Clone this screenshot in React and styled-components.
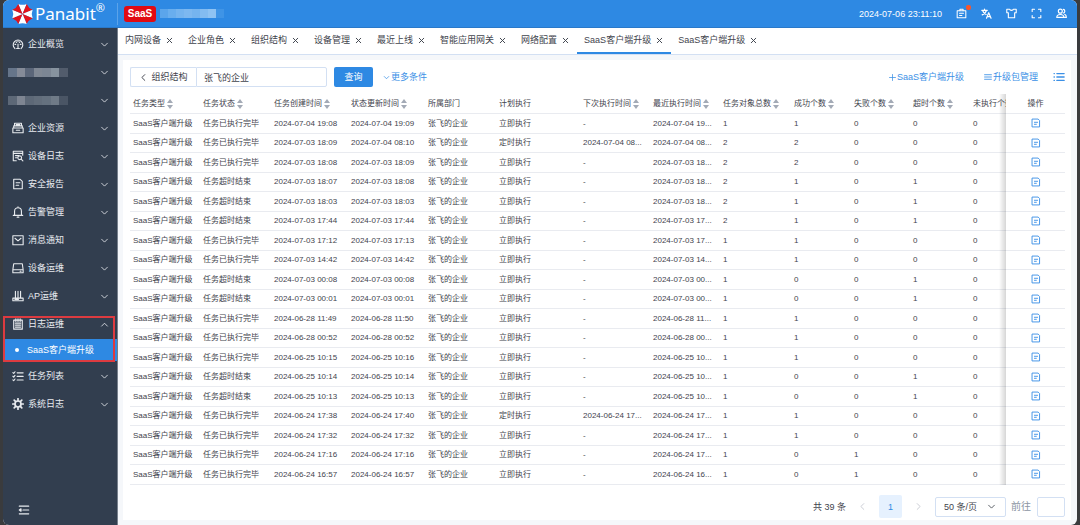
import React from 'react';
import styled, { createGlobalStyle, css } from 'styled-components';

const GlobalStyle = createGlobalStyle`
  * {
    box-sizing: border-box;
  }

  body {
    margin: 0;
    background: #3a3b3d;
    color: #3f444d;
    font: 9px/12px 'Liberation Sans', 'Noto Sans CJK SC', sans-serif;
  }

  button, input, select {
    font: inherit;
    color: inherit;
  }

  button {
    padding: 0;
    border: 0;
    background: none;
    cursor: pointer;
  }
`;

const Shell = styled.div`
  display: flex;
  flex-direction: column;
  min-height: 100vh;
  margin: 0 3px;
  border-radius: 6px;
  overflow: hidden;
  background: #f5f7fa;
`;

const Svg = styled.svg`
  flex: none;
  width: ${props => props.$size || 12}px;
  height: ${props => props.$size || 12}px;
  fill: none;
  stroke: currentColor;
  stroke-width: ${props => props.$weight || 1.3};
  stroke-linecap: round;
  stroke-linejoin: round;
`;

/* ---------- header ---------- */

const Header = styled.header`
  display: flex;
  align-items: center;
  height: 28px;
  padding-right: 10px;
  background: #2e89e3;
  border-bottom: 1px solid #2a79c9;
  color: #fff;
`;

const Brand = styled.a`
  display: flex;
  align-items: center;
  gap: 2px;
  width: 115px;
  height: 22px;
  padding-left: 9px;
  border-right: 1px solid #5ba3ea;
  color: #fff;
  font: 17px/22px 'Noto Sans', sans-serif;
  text-decoration: none;

  sup {
    align-self: flex-start;
    margin-left: -2px;
    font-size: 11px;
    line-height: 10px;
  }
`;

const SaasBadge = styled.span`
  width: 32px;
  margin-left: 6px;
  border-radius: 3px;
  background: #e10a12;
  font-weight: bold;
  font-size: 10px;
  line-height: 16px;
  text-align: center;
`;

const Mosaic = styled.span`
  display: flex;
  margin-left: ${props => props.$indent || 0}px;
`;

const Tile = styled.i`
  width: ${props => props.$w}px;
  height: ${props => props.$h}px;
  background: ${props => props.$color};
`;

const HeaderTools = styled.div`
  display: flex;
  align-items: center;
  gap: 14px;
  margin-left: auto;
`;

const ToolButton = styled.button`
  position: relative;
  display: flex;
  color: #fff;
`;

const Dot = styled.i`
  position: absolute;
  top: -3px;
  right: -4px;
  width: 5px;
  height: 5px;
  border-radius: 2px;
  background: #f9552b;
`;

/* ---------- sidebar ---------- */

const Body = styled.div`
  display: flex;
  flex: 1;
`;

const Sidebar = styled.nav`
  display: flex;
  flex: none;
  flex-direction: column;
  width: 115px;
  padding: 2px 0 9px;
  border-right: 1px solid #77808c;
  background: #323e4f;
  color: #e8ebef;
`;

const NavGroup = styled.div`
  position: relative;
  ${props => props.$marked && css`
    &::after {
      content: '';
      position: absolute;
      inset: 6px 2px 0 0;
      border: 2px solid #dd3b40;
      pointer-events: none;
    }
  `}
`;

const NavItem = styled.button`
  display: flex;
  align-items: center;
  gap: 4px;
  width: 100%;
  height: 28px;
  padding: 0 8px 0 ${props => (props.$flush ? 5 : 9)}px;
  color: inherit;

  > svg:last-child {
    margin-left: auto;
  }
`;

const SubItem = styled.a`
  display: flex;
  align-items: center;
  gap: 8px;
  height: 24px;
  padding-left: 12px;
  border-top: 1px solid #323e4f;
  border-bottom: 1px solid #323e4f;
  background: #2e89e3;
  color: #fff;
  text-decoration: none;

  &::before {
    content: '';
    width: 4px;
    height: 4px;
    border-radius: 50%;
    background: #fff;
  }
`;

const Collapse = styled.button`
  display: flex;
  margin: auto 0 0 15px;
  color: #e8ebef;
`;

/* ---------- tabs ---------- */

const Main = styled.main`
  display: flex;
  flex: 1;
  flex-direction: column;
  min-width: 0;
`;

const TabBar = styled.div`
  display: flex;
  height: 27px;
  border-bottom: 1px solid #d3e0f3;
  background: #fff;
`;

const Tab = styled.div`
  display: flex;
  align-items: center;
  gap: 4px;
  height: 26px;
  padding: 0 7px;
  border-bottom: 2px solid ${props => (props.$active ? '#2e89e3' : 'transparent')};
  white-space: nowrap;

  button {
    display: flex;
  }
`;

/* ---------- content ---------- */

const Panel = styled.section`
  display: flex;
  flex: 1;
  flex-direction: column;
  margin: 5px 6px 5px 5px;
  padding: 7px 6px 2px 7px;
  background: #fff;
`;

const Toolbar = styled.form`
  display: flex;
  align-items: center;
  margin-bottom: 7px;
`;

const OrgButton = styled.button`
  display: flex;
  align-items: center;
  justify-content: center;
  gap: 3px;
  width: 66px;
  height: 20px;
  border: 1px solid #d3e0f3;
  border-right: 0;
  border-radius: 2px 0 0 2px;
`;

const TextInput = styled.input`
  width: ${props => props.$width}px;
  height: 20px;
  padding: 0 7px;
  border: 1px solid #d3e0f3;
  border-radius: ${props => props.$radius || '2px'};
  background: #fff;
  outline: none;
`;

const QueryButton = styled.button`
  width: 39px;
  height: 20px;
  margin-left: 7px;
  border-radius: 2px;
  background: #2e89e3;
  color: #fff;
`;

const LinkButton = styled.button`
  display: flex;
  align-items: center;
  gap: 1px;
  margin-left: ${props => props.$space}px;
  color: #3b90e6;
`;

const Spacer = styled.span`
  flex: 1;
`;

const TableScroll = styled.div`
  overflow-x: auto;
  scrollbar-width: none;
`;

const Table = styled.table`
  width: 100%;
  min-width: 959px;
  table-layout: fixed;
  border-collapse: separate;
  border-spacing: 0;
  font-size: 8px;
  line-height: 12px;

  th, td {
    padding: 0 3px;
    border-bottom: 1px solid #e9ebf0;
    font-weight: normal;
    text-align: left;
    white-space: nowrap;
  }

  th {
    height: 20px;
  }

  tbody tr {
    height: 19px;
  }

  tbody tr:nth-child(odd) {
    height: 20px;
  }

  th:last-child, td:last-child {
    position: sticky;
    right: 0;
    background: #fff;
    text-align: center;
  }

  /* shade cast by the fixed column */
  th:last-child::before, td:last-child::before {
    content: '';
    position: absolute;
    top: 0;
    bottom: -1px;
    right: 100%;
    width: 7px;
    background: linear-gradient(to left, rgba(0, 0, 0, 0.16), rgba(0, 0, 0, 0));
  }
`;

const HeadLabel = styled.span`
  display: inline-flex;
  align-items: center;
  gap: 2px;
`;

const SortIcon = styled.svg`
  width: 6px;
  height: 10px;
  fill: #a3aab6;
`;

const RowAction = styled.button`
  display: inline-flex;
  vertical-align: middle;
  color: #3b90e6;
`;

const Pagination = styled.div`
  display: flex;
  align-items: center;
  justify-content: flex-end;
  margin-top: auto;
`;

const PageArrow = styled.button`
  display: flex;
  margin: 0 12px;
  color: #c0c4cc;
`;

const PageNumber = styled.button`
  width: 23px;
  height: 23px;
  border-radius: 2px;
  background: #e6f1fe;
  color: #2e89e3;
`;

const SelectWrap = styled.span`
  display: flex;
  align-items: center;
  width: 71px;
  height: 20px;
  margin-right: 5px;
  padding-right: 9px;
  border: 1px solid #d3e0f3;
  border-radius: 2px;

  select {
    flex: 1;
    min-width: 0;
    padding: 0 0 0 8px;
    border: 0;
    background: none;
    appearance: none;
    outline: none;
  }
`;

const JumpLabel = styled.label`
  display: flex;
  align-items: center;
  gap: 6px;
  color: #8d95a3;
  font-size: 10px;
`;

const ICONS = {
  overview: <><path d="M3.4 12.3A5.6 5.6 0 1 1 10.6 12.3" /><path d="M7 7v5.2M5.4 12.2h3.2M3.4 7.4h1M9.6 7.4h1M4.8 4.6l.6.6M9.2 4.6l-.6.6M7 3.4v.8" /></>,
  resource: <><path d="M3 4.5V1.5h8v3M2 7V4.5h10V7M1 7h12v5.5H1zM5 9.7h4M5 3h4" /></>,
  log: <><path d="M5 12.5H1.5v-11h11V6M1.5 4h11M4 6.5h4M4 9h2" /><circle cx="9" cy="9" r="2.2" /><path d="M10.7 10.7l2 2" /></>,
  report: <path d="M2 1.5h7.5L12 4v8.5H2zM4.8 5.5h4.4M4.8 8.5h3" />,
  bell: <path d="M1.5 11h11M3 11V6a4 4 0 0 1 8 0v5M7 2V1M6 13h2" />,
  mail: <><rect x="1" y="2" width="12" height="10.5" /><path d="M3.5 5L7 8l3.5-3" /></>,
  device: <path d="M1 9l1-7h10l1 7v3.5H1zM1 9h12M9.5 10.8h1" />,
  ap: <path d="M1 9.5h12v3H1zM4 9V1.5M7 9V1.5M10 9V1.5M3.5 11h4" />,
  notes: <path d="M2 2.5h10V13H2zM4.5 1v3M7 1v3M9.500 1v3M4 6h6M4 8.300h6M4 10.600h6" />,
  tasks: <path d="M1 3l1 1 1.500-2M1 7.300l1 1 1.500-2M1 11.500l1 1 1.500-2M6 3.300h7M6 7.500h7M6 11.700h7" />,
  gear: <><circle cx="7" cy="7" r="3.500" strokeWidth="2" /><path d="M7 .8v2M7 11.200v2M.8 7h2M11.200 7h2M2.600 2.600l1.400 1.400M10 10l1.400 1.400M2.600 11.400L4 10M10 4l1.400-1.400" strokeWidth="2" /></>,
  collapse: <path d="M1.500 2.500h11M6 7h6.500M1.500 11.500h11M3.500 5.500L1.500 7l2 1.500M1.500 7h3" />,
  close: <path d="M3.500 3.500l7 7M10.500 3.500l-7 7" />,
  down: <path d="M2.500 5L7 9.500 11.500 5" />,
  up: <path d="M2.500 9.500L7 5l4.500 4.500" />,
  left: <path d="M9 2.500L4.500 7 9 11.500" />,
  right: <path d="M5 2.500L9.500 7 5 11.500" />,
  plus: <path d="M7 1v12M1 7h12" />,
  lines: <path d="M1 3h12M1 7h12M1 11h12" />,
  list: <path d="M4.500 3H13M4.500 7H13M4.500 11H13M1.200 3h.4M1.200 7h.4M1.200 11h.4" />,
  detail: <path d="M2 1.500h8l2 2v9H2zM4.800 6h4.400M4.800 8.800h2.700" />,
  board: <><rect x="1.500" y="3.500" width="11" height="9" /><path d="M5 3.500V1.500h4v2M4.500 6.800h5M4.500 9.500h3" /></>,
  translate: <path d="M1 3h7M4.500 1.500V3M2 3.200c.6 2 2.500 4 4.500 5M7 3.200c-.6 2-2.800 4.500-5.500 5.500M7 13l2.800-7L12.800 13M8 11h3.800" />,
  shirt: <path d="M4.500 1.500H1V6h2v6.500h8V6h2V1.500H9.500C9 3.500 5 3.500 4.500 1.500z" />,
  expand: <path d="M1.500 4.500v-3h3M9.500 1.500h3v3M12.500 9.500v3h-3M4.500 12.500h-3v-3" />,
  users: <><circle cx="5.500" cy="4" r="2.500" /><path d="M1 12c0-5 9-5 9 0zM9.500 1.800a2.400 2.400 0 0 1 0 4.600M11 8c1.500.6 2.200 2 2.200 4H11" /></>,
};

const Icon = ({ name, size, weight }) => (
  <Svg viewBox="0 0 14 14" $size={size} $weight={weight} aria-hidden="true">{ICONS[name]}</Svg>
);

const Logo = () => (
  <svg width="21" height="22" viewBox="-11 -11 22 22" aria-hidden="true">
    {[0, 45, 90, 135, 180, 225, 270, 315].map((angle, i) => (
      <path
        key={angle}
        d="M0 0L-4.400-10.600Q0-8.800 4.400-10.600Z"
        fill={i % 2 ? '#e1141c' : '#fff'}
        transform={`rotate(${angle})`}
      />
    ))}
  </svg>
);

const MENU = [
  { icon: 'overview', label: '企业概览' },
  { tiles: ['#66758a', '#858b98', '#5b6679', '#808894', '#7c8694', '#87939f', '#525c6c'] },
  { tiles: ['#5d6877', '#7e8592', '#5d6877', '#626d7b', '#65717f', '#6f7a87', '#4a5565'] },
  { icon: 'resource', label: '企业资源' },
  { icon: 'log', label: '设备日志' },
  { icon: 'report', label: '安全报告' },
  { icon: 'bell', label: '告警管理' },
  { icon: 'mail', label: '消息通知' },
  { icon: 'device', label: '设备运维' },
  { icon: 'ap', label: 'AP运维' },
  { icon: 'notes', label: '日志运维', child: 'SaaS客户端升级' },
  { icon: 'tasks', label: '任务列表' },
  { icon: 'gear', label: '系统日志' },
];

const TABS = ['内网设备', '企业角色', '组织结构', '设备管理', '最近上线', '智能应用网关', '网络配置', 'SaaS客户端升级', 'SaaS客户端升级'];

const COLUMNS = [
  { title: '任务类型', width: 70, sort: true },
  { title: '任务状态', width: 71, sort: true },
  { title: '任务创建时间', width: 77, sort: true },
  { title: '状态更新时间', width: 77, sort: true },
  { title: '所属部门', width: 71 },
  { title: '计划执行' },
  { title: '下次执行时间', width: 70, sort: true },
  { title: '最近执行时间', width: 70, sort: true },
  { title: '任务对象总数', width: 71, sort: true },
  { title: '成功个数', width: 60, sort: true },
  { title: '失败个数', width: 59, sort: true },
  { title: '超时个数', width: 60, sort: true },
  { title: '未执行个数', width: 60 },
  { title: '操作', width: 59 },
];

const DONE = '任务已执行完毕';
const TIMEOUT = '任务超时结束';
const NOW = '立即执行';
const TIMED = '定时执行';

// status, created, updated, plan, next, last, total, success, failed, timeout
const TASKS = [
  [DONE, '2024-07-04 19:08', '2024-07-04 19:09', NOW, '-', '2024-07-04 19...', 1, 1, 0, 0],
  [DONE, '2024-07-03 18:09', '2024-07-04 08:10', TIMED, '2024-07-04 08...', '2024-07-04 08...', 2, 2, 0, 0],
  [DONE, '2024-07-03 18:08', '2024-07-03 18:09', NOW, '-', '2024-07-03 18...', 2, 2, 0, 0],
  [TIMEOUT, '2024-07-03 18:07', '2024-07-03 18:08', NOW, '-', '2024-07-03 18...', 2, 1, 0, 1],
  [TIMEOUT, '2024-07-03 18:03', '2024-07-03 18:03', NOW, '-', '2024-07-03 18...', 2, 1, 0, 1],
  [TIMEOUT, '2024-07-03 17:44', '2024-07-03 17:44', NOW, '-', '2024-07-03 17...', 2, 1, 0, 1],
  [DONE, '2024-07-03 17:12', '2024-07-03 17:13', NOW, '-', '2024-07-03 17...', 1, 1, 0, 0],
  [DONE, '2024-07-03 14:42', '2024-07-03 14:42', NOW, '-', '2024-07-03 14...', 1, 1, 0, 0],
  [TIMEOUT, '2024-07-03 00:08', '2024-07-03 00:08', NOW, '-', '2024-07-03 00...', 1, 0, 0, 1],
  [TIMEOUT, '2024-07-03 00:01', '2024-07-03 00:01', NOW, '-', '2024-07-03 00...', 1, 0, 0, 1],
  [DONE, '2024-06-28 11:49', '2024-06-28 11:50', NOW, '-', '2024-06-28 11...', 1, 1, 0, 0],
  [DONE, '2024-06-28 00:52', '2024-06-28 00:52', NOW, '-', '2024-06-28 00...', 1, 1, 0, 0],
  [DONE, '2024-06-25 10:15', '2024-06-25 10:16', NOW, '-', '2024-06-25 10...', 1, 1, 0, 0],
  [TIMEOUT, '2024-06-25 10:14', '2024-06-25 10:14', NOW, '-', '2024-06-25 10...', 1, 0, 0, 1],
  [TIMEOUT, '2024-06-25 10:13', '2024-06-25 10:13', NOW, '-', '2024-06-25 10...', 1, 0, 0, 1],
  [DONE, '2024-06-24 17:38', '2024-06-24 17:40', TIMED, '2024-06-24 17...', '2024-06-24 17...', 1, 1, 0, 0],
  [DONE, '2024-06-24 17:32', '2024-06-24 17:32', NOW, '-', '2024-06-24 17...', 1, 1, 0, 0],
  [DONE, '2024-06-24 17:16', '2024-06-24 17:16', NOW, '-', '2024-06-24 17...', 1, 0, 1, 0],
  [DONE, '2024-06-24 16:57', '2024-06-24 16:57', NOW, '-', '2024-06-24 16...', 1, 0, 1, 0],
];

const TopBar = () => (
  <Header>
    <Brand href="#home"><Logo />Panabit<sup>®</sup></Brand>
    <SaasBadge>SaaS</SaasBadge>
    <Mosaic $indent={4}>
      {['#5ba5eb', '#69aeee', '#75b4ef', '#7db8f0', '#75b4ef', '#83bcf1', '#8fc3f3', '#3f94e6'].map((color, i) => (
        <Tile key={i} $w={8} $h={9} $color={color} />
      ))}
    </Mosaic>
    <HeaderTools>
      <time>2024-07-06 23:11:10</time>
      <ToolButton aria-label="公告"><Icon name="board" size={11} /><Dot /></ToolButton>
      <ToolButton aria-label="语言"><Icon name="translate" size={11} weight={1.5} /></ToolButton>
      <ToolButton aria-label="主题"><Icon name="shirt" size={11} weight={1.4} /></ToolButton>
      <ToolButton aria-label="全屏"><Icon name="expand" size={11} weight={1.4} /></ToolButton>
      <ToolButton aria-label="用户"><Icon name="users" size={11} weight={1.5} /></ToolButton>
    </HeaderTools>
  </Header>
);

const Menu = () => (
  <Sidebar>
    {MENU.map((item, i) => (
      <NavGroup key={i} $marked={Boolean(item.child)}>
        <NavItem aria-label={item.label || '菜单'} $flush={Boolean(item.tiles)}>
          {item.tiles ? (
            <Mosaic>
              {item.tiles.map((color, n) => <Tile key={n} $w={n % 2 ? 8 : 9} $h={9} $color={color} />)}
            </Mosaic>
          ) : (
            <><Icon name={item.icon} />{item.label}</>
          )}
          <Icon name={item.child ? 'up' : 'down'} size={9} />
        </NavItem>
        {item.child && <SubItem href="#upgrade">{item.child}</SubItem>}
      </NavGroup>
    ))}
    <Collapse aria-label="收起菜单"><Icon name="collapse" /></Collapse>
  </Sidebar>
);

const TaskTable = () => (
  <TableScroll>
    <Table>
      <colgroup>
        {COLUMNS.map(col => <col key={col.title} width={col.width} />)}
      </colgroup>
      <thead>
        <tr>
          {COLUMNS.map(col => (
            <th key={col.title}>
              <HeadLabel>
                {col.title}
                {col.sort && (
                  <SortIcon viewBox="0 0 6 10"><path d="M3 0L6 4H0zM3 10L0 6h6z" /></SortIcon>
                )}
              </HeadLabel>
            </th>
          ))}
        </tr>
      </thead>
      <tbody>
        {TASKS.map(([status, created, updated, plan, ...rest]) => (
          <tr key={created}>
            <td>SaaS客户端升级</td>
            <td>{status}</td>
            <td>{created}</td>
            <td>{updated}</td>
            <td>张飞的企业</td>
            <td>{plan}</td>
            {rest.map((value, n) => <td key={n}>{value}</td>)}
            <td>0</td>
            <td><RowAction aria-label="详情"><Icon name="detail" size={10} /></RowAction></td>
          </tr>
        ))}
      </tbody>
    </Table>
  </TableScroll>
);

const App = () => (
  <>
    <GlobalStyle />
    <Shell>
      <TopBar />
      <Body>
        <Menu />
        <Main>
          <TabBar>
            {TABS.map((tab, i) => (
              <Tab key={i} $active={i === 7}>
                {tab}
                <button aria-label={`关闭${tab}`}><Icon name="close" size={9} weight={1.5} /></button>
              </Tab>
            ))}
          </TabBar>
          <Panel>
            <Toolbar onSubmit={e => e.preventDefault()}>
              <OrgButton type="button"><Icon name="left" size={9} weight={1.5} />组织结构</OrgButton>
              <TextInput $width={131} $radius="0 2px 2px 0" defaultValue="张飞的企业" aria-label="组织结构" />
              <QueryButton>查询</QueryButton>
              <LinkButton type="button" $space={10}><Icon name="down" size={7} weight={1.5} />更多条件</LinkButton>
              <Spacer />
              <LinkButton type="button" $space={0}><Icon name="plus" size={7} weight={1.5} />SaaS客户端升级</LinkButton>
              <LinkButton type="button" $space={20}><Icon name="lines" size={8} weight={1.5} />升级包管理</LinkButton>
              <LinkButton type="button" $space={15} aria-label="列设置"><Icon name="list" weight={1.5} /></LinkButton>
            </Toolbar>
            <TaskTable />
            <Pagination>
              共 39 条
              <PageArrow aria-label="上一页"><Icon name="left" size={9} /></PageArrow>
              <PageNumber>1</PageNumber>
              <PageArrow aria-label="下一页"><Icon name="right" size={9} /></PageArrow>
              <SelectWrap>
                <select aria-label="每页条数"><option>50 条/页</option></select>
                <Icon name="down" size={9} />
              </SelectWrap>
              <JumpLabel>前往<TextInput $width={28} /></JumpLabel>
            </Pagination>
          </Panel>
        </Main>
      </Body>
    </Shell>
  </>
);

export default App;
